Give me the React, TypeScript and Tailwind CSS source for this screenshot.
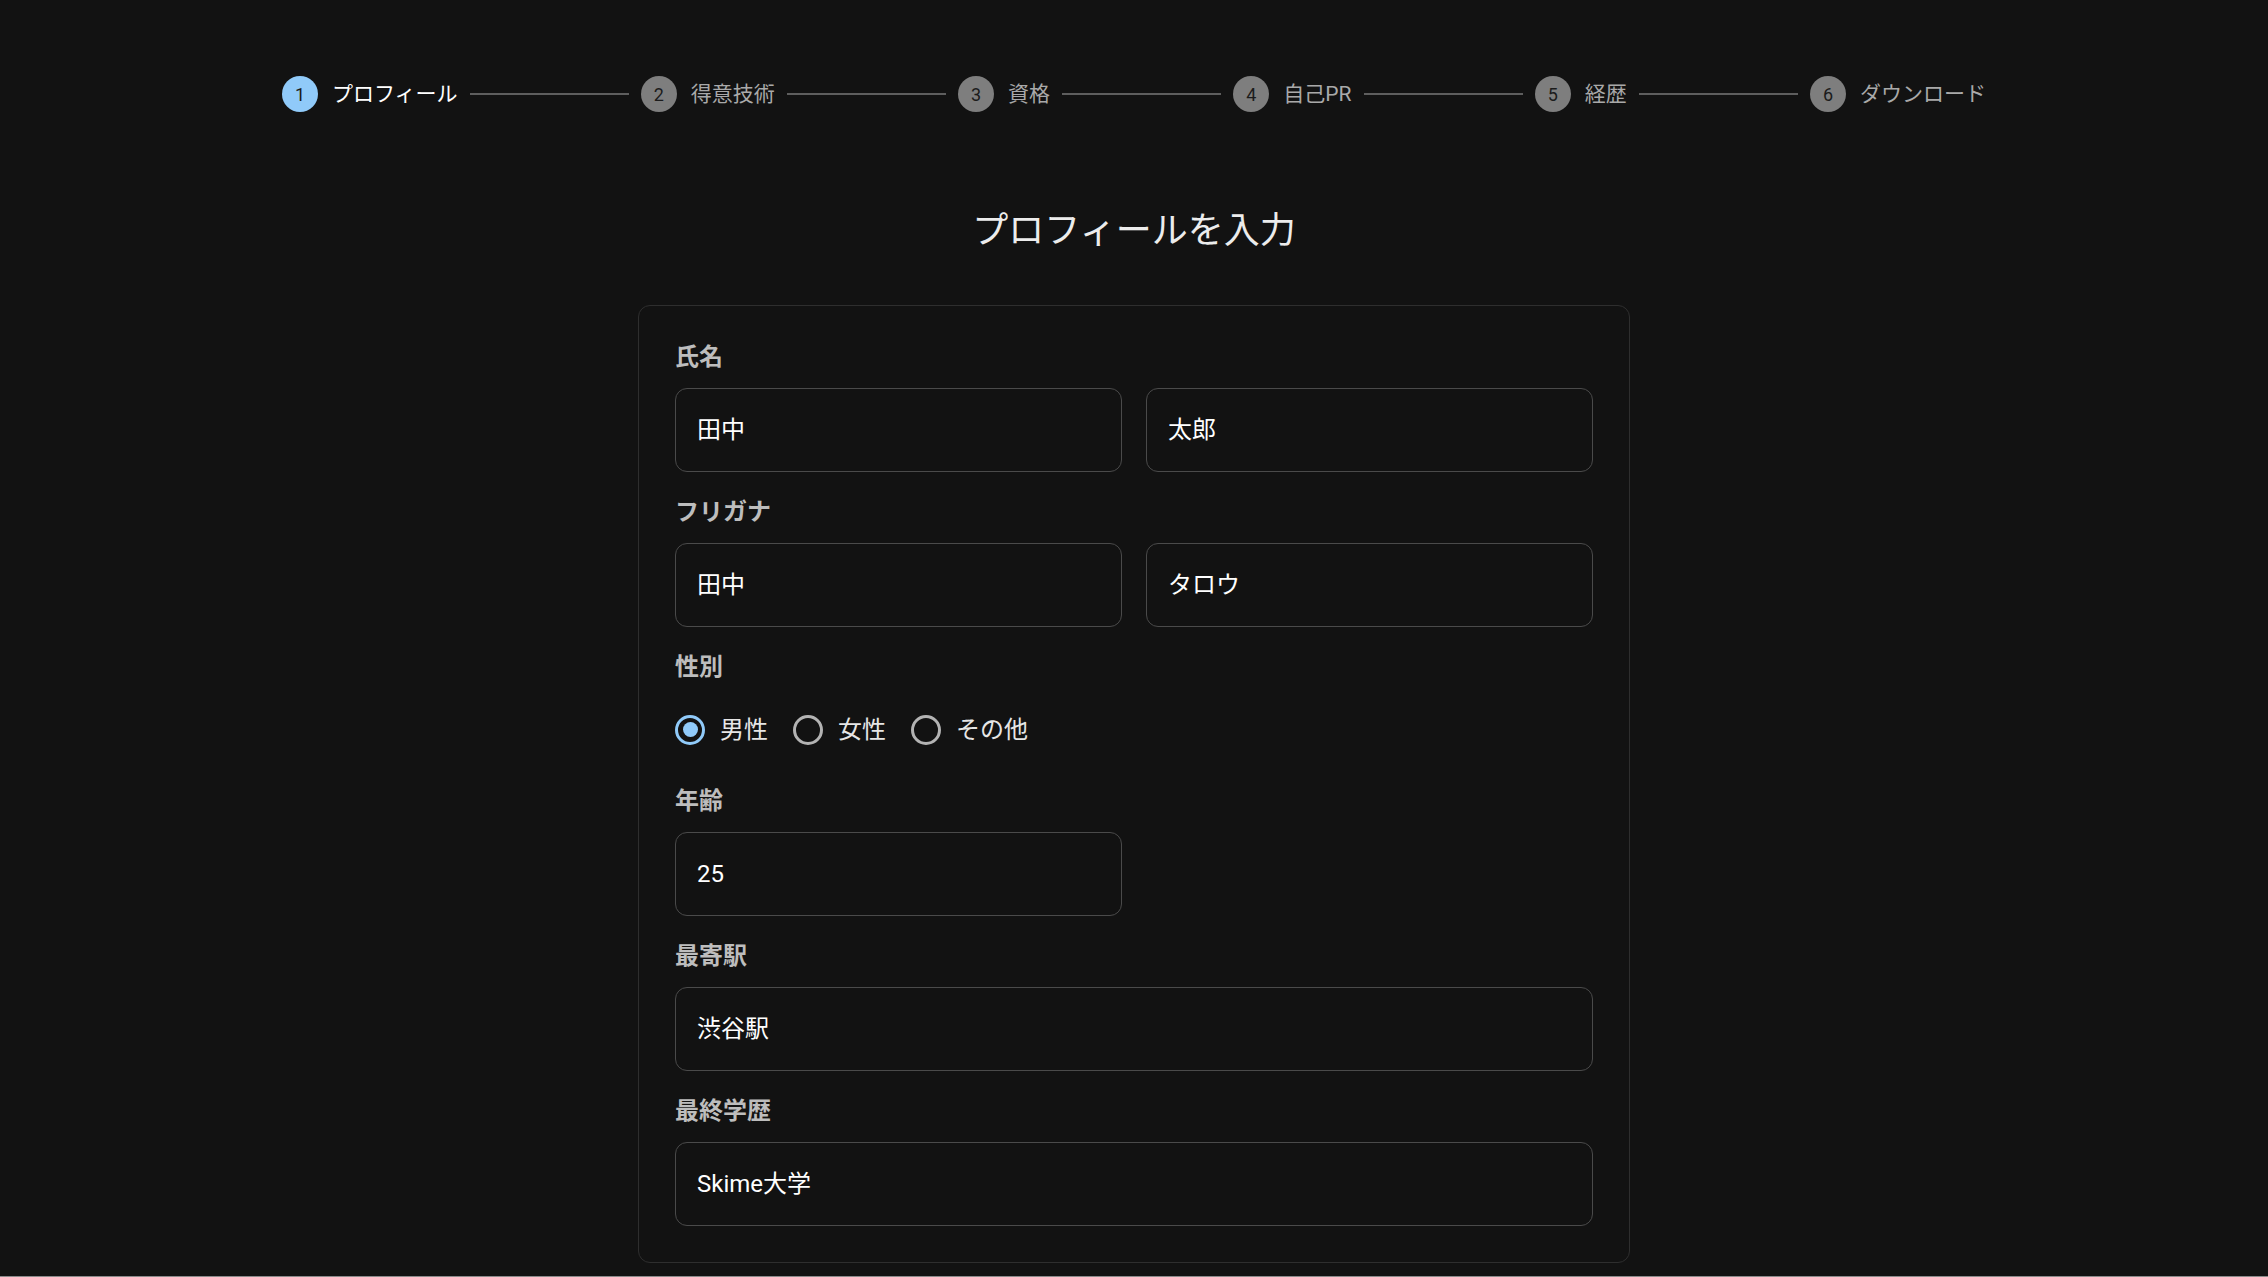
const FONT = { fontFamily: 'Roboto, "Noto Sans CJK JP", sans-serif' };

const STEPS = ["プロフィール", "得意技術", "資格", "自己PR", "経歴", "ダウンロード"];

function Stepper({ active }: { active: number }) {
  return (
    <div className="flex h-[36px] items-center">
      {STEPS.map((label, i) => (
        <div key={label} className="contents">
          {i > 0 && <div className="h-[2px] flex-1 bg-[#5e5e5e]" />}
          <div className="flex items-center px-[12px]">
            <div
              className={`flex h-[36px] w-[36px] items-center justify-center rounded-full text-[18px] ${
                i === active ? "bg-[#90caf9] text-[#1b1b1b]" : "bg-[#7e7e7e] text-[#1b1b1b]"
              }`}
            >
              {i + 1}
            </div>
            <span
              className={`ml-[14px] text-[21px] leading-none whitespace-nowrap ${
                i === active ? "text-white" : "text-[#a9a9a9]"
              }`}
            >
              {label}
            </span>
          </div>
        </div>
      ))}
    </div>
  );
}

function Field({ label, children }: { label: string; children: React.ReactNode }) {
  return (
    <div>
      <div className="mb-[14px] h-[33px] text-[24px] font-semibold leading-[33px] text-[#bdbdbd]">{label}</div>
      {children}
    </div>
  );
}

function Input({ value }: { value: string }) {
  return (
    <div className="flex h-[84px] items-center rounded-[12px] border border-[#4a4a4a] px-[21px] text-[24px] text-white">
      {value}
    </div>
  );
}

function Radio({ label, checked }: { label: string; checked?: boolean }) {
  return (
    <div className="flex items-center">
      <div
        className={`flex h-[30px] w-[30px] items-center justify-center rounded-full border-[3px] ${
          checked ? "border-[#90caf9]" : "border-[#b3b3b3]"
        }`}
      >
        {checked && <div className="h-[15px] w-[15px] rounded-full bg-[#90caf9]" />}
      </div>
      <span className="ml-[15px] text-[24px] text-[#e6e6e6]">{label}</span>
    </div>
  );
}

export default function App() {
  return (
    <div className="bg-[#8a8a8a]" style={FONT}>
      <div className="h-[1276px] overflow-hidden bg-[#121212]">
        <div className="mx-auto w-[1800px] px-[36px] pt-[76px]">
          <Stepper active={0} />

          <h1 className="mt-[95px] text-center text-[36px] font-normal leading-[48px] text-[#ececec]">
            プロフィールを入力
          </h1>

          <div className="mx-auto mt-[50px] w-[992px] rounded-[12px] border border-[#2e2e2e] px-[36px] pt-[35px] pb-[36px]">
            <div className="flex flex-col gap-[24px]">
              <Field label="氏名">
                <div className="grid grid-cols-2 gap-[24px]">
                  <Input value="田中" />
                  <Input value="太郎" />
                </div>
              </Field>
              <Field label="フリガナ">
                <div className="grid grid-cols-2 gap-[24px]">
                  <Input value="田中" />
                  <Input value="タロウ" />
                </div>
              </Field>
              <Field label="性別">
                <div className="flex h-[63px] items-center gap-[25px]">
                  <Radio label="男性" checked />
                  <Radio label="女性" />
                  <Radio label="その他" />
                </div>
              </Field>
              <Field label="年齢">
                <div className="grid grid-cols-2 gap-[24px]">
                  <Input value="25" />
                </div>
              </Field>
              <Field label="最寄駅">
                <Input value="渋谷駅" />
              </Field>
              <Field label="最終学歴">
                <Input value="Skime大学" />
              </Field>
            </div>
          </div>
        </div>
      </div>
      <div className="h-px" />
    </div>
  );
}
